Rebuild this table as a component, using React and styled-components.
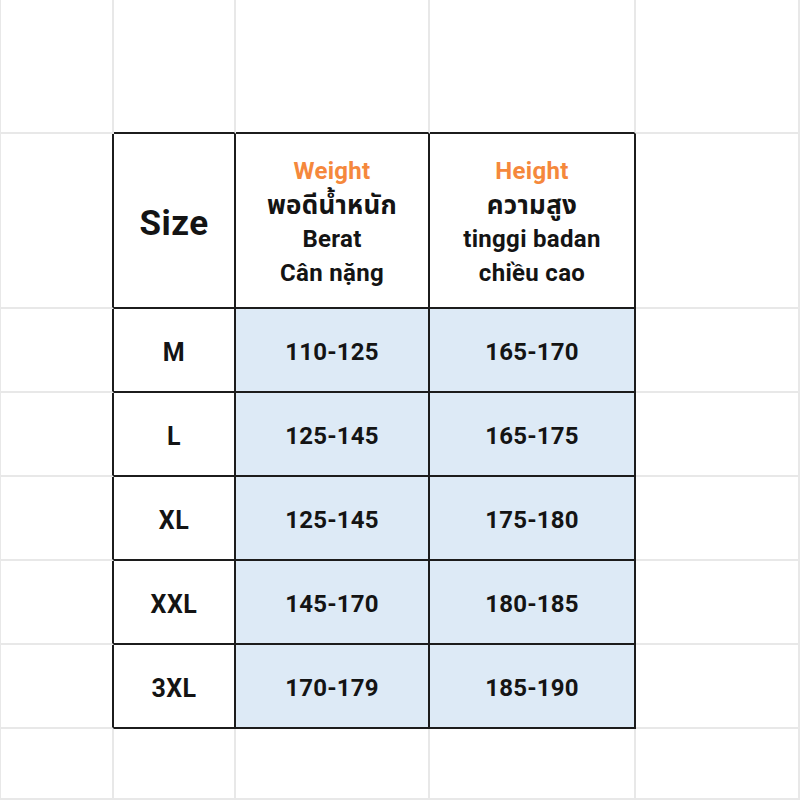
import styled, { createGlobalStyle } from "styled-components";

const GlobalStyle = createGlobalStyle`
  html, body {
    margin: 0;
    padding: 0;
    background: #ffffff;
  }
  body {
    font-family: Roboto, "Noto Sans Thai", "Noto Sans", "DejaVu Sans", sans-serif;
    color: #141414;
  }
`;

const rows = [
  ["M", "110-125", "165-170"],
  ["L", "125-145", "165-175"],
  ["XL", "125-145", "175-180"],
  ["XXL", "145-170", "180-185"],
  ["3XL", "170-179", "185-190"],
];

const App = () => {
  return (
    <>
      <GlobalStyle />
      <Sheet>
        {/* top spacer row */}
        <Cell />
        <Cell $darkBottom />
        <Cell $darkBottom />
        <Cell $darkBottom />
        <Cell />

        {/* header row */}
        <Cell $darkRight />
        <Cell $dark>
          <SizeTitle>Size</SizeTitle>
        </Cell>
        <Cell $dark>
          <Head>
            <Accent>Weight</Accent>
            <Thai>พอดีน้ำหนัก</Thai>
            <span>Berat</span>
            <span>Cân nặng</span>
          </Head>
        </Cell>
        <Cell $dark>
          <Head>
            <Accent>Height</Accent>
            <Thai>ความสูง</Thai>
            <span>tinggi badan</span>
            <span>chiều cao</span>
          </Head>
        </Cell>
        <Cell />

        {rows.map(([size, weight, height]) => (
          <Row key={size}>
            <Cell $darkRight />
            <Cell $dark>
              <Label>{size}</Label>
            </Cell>
            <Cell $dark $fill>
              <Value>{weight}</Value>
            </Cell>
            <Cell $dark $fill>
              <Value>{height}</Value>
            </Cell>
            <Cell />
          </Row>
        ))}

        {/* bottom spacer row */}
        <Cell />
        <Cell />
        <Cell />
        <Cell />
        <Cell />
      </Sheet>
    </>
  );
};

export default App;

const Sheet = styled.div`
  display: grid;
  grid-template-columns: 113px 122px 194px 206px 164px;
  grid-template-rows: 134px 175px repeat(5, 84px) 71px;
  width: 800px;
  height: 800px;
  box-sizing: border-box;
  border-left: 1px solid #e8e8e8;
`;

const Row = styled.div`
  display: contents;
`;

const Cell = styled.div`
  box-sizing: border-box;
  display: flex;
  align-items: center;
  justify-content: center;
  text-align: center;
  background: ${(p) => (p.$fill ? "#ddeaf6" : "#ffffff")};
  border-right: 2px solid
    ${(p) => (p.$dark || p.$darkRight ? "#1c1c1c" : "#e8e8e8")};
  border-bottom: 2px solid
    ${(p) => (p.$dark || p.$darkBottom ? "#1c1c1c" : "#e8e8e8")};
`;

const SizeTitle = styled.div`
  font-size: 35px;
  font-weight: 700;
  letter-spacing: 0.5px;
  padding-top: 6px;
`;

const Head = styled.div`
  display: flex;
  flex-direction: column;
  align-items: center;
  font-size: 24px;
  font-weight: 700;
  line-height: 34px;
  padding-top: 2px;
  letter-spacing: 0.3px;
`;

const Thai = styled.span`
  font-size: 26px;
`;

const Accent = styled.span`
  color: #f5883c;
`;

const Label = styled.div`
  font-size: 25px;
  font-weight: 700;
  letter-spacing: 0.5px;
  padding-top: 4px;
`;

const Value = styled.div`
  font-size: 24px;
  font-weight: 700;
  letter-spacing: 0.2px;
  padding-top: 4px;
`;
